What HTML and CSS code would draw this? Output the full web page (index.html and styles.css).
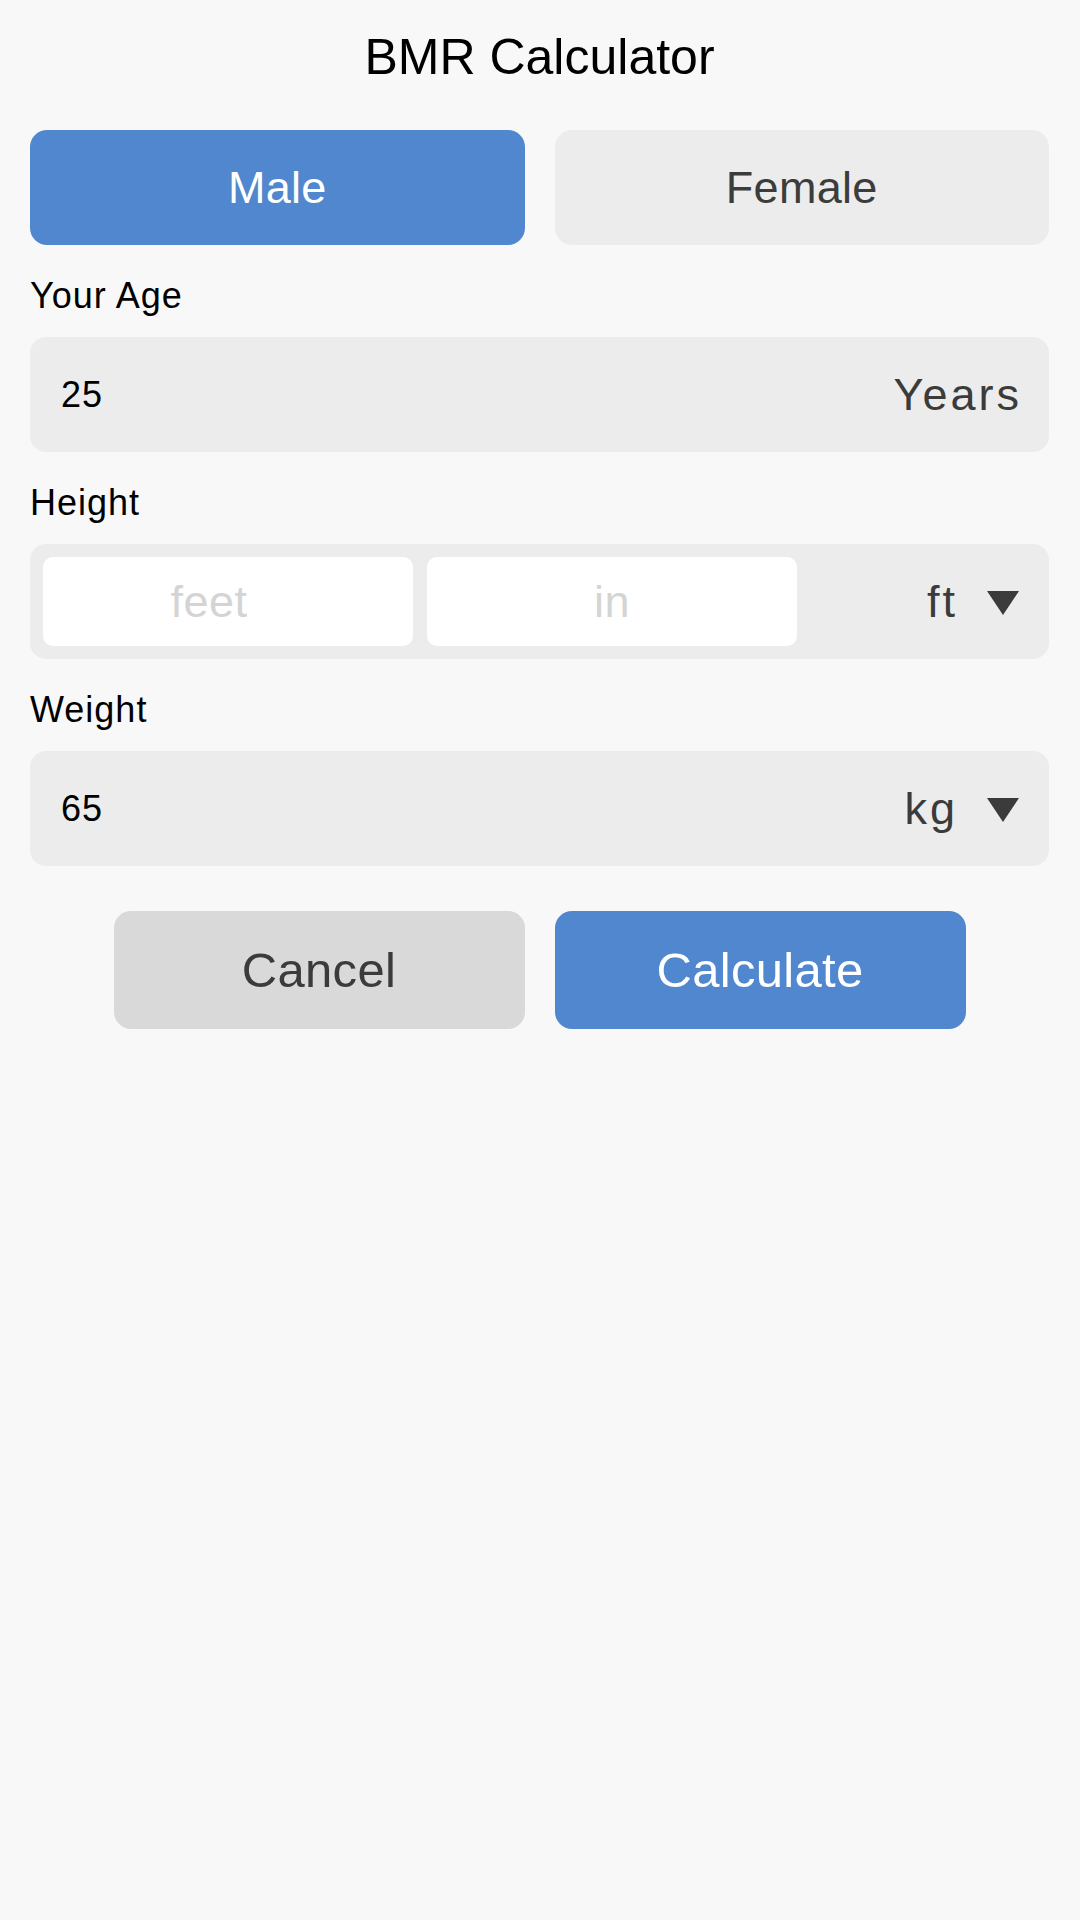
FILE: index.html
```html
<!DOCTYPE html>
<html lang="en">
<head>
<meta charset="utf-8">
<title>BMR Calculator</title>
<link rel="stylesheet" href="styles.css">
</head>
<body>
<main class="page">
  <h1 class="title">BMR Calculator</h1>
  <div class="gender-row">
    <div class="gender gender-active">Male</div>
    <div class="gender">Female</div>
  </div>

  <div class="label">Your Age</div>
  <div class="field">
    <span class="value">25</span>
    <span class="unit unit-years">Years</span>
  </div>

  <div class="label">Height</div>
  <div class="field field-height">
    <div class="subinput subinput-feet">feet</div>
    <div class="subinput">in</div>
    <div class="unit-select">
      <span class="unit">ft</span>
      <svg class="caret" width="32" height="24" viewBox="0 0 32 24"><polygon points="0,0 32,0 16,24" fill="#3b3b3b"/></svg>
    </div>
  </div>

  <div class="label">Weight</div>
  <div class="field">
    <span class="value">65</span>
    <div class="unit-select">
      <span class="unit">kg</span>
      <svg class="caret" width="32" height="24" viewBox="0 0 32 24"><polygon points="0,0 32,0 16,24" fill="#3b3b3b"/></svg>
    </div>
  </div>

  <div class="actions">
    <div class="btn btn-cancel">Cancel</div>
    <div class="btn btn-primary">Calculate</div>
  </div>
</main>
</body>
</html>
```

FILE: styles.css
```css
html, body {
  margin: 0;
  padding: 0;
  background: #f8f8f8;
}
body {
  width: 1080px;
  height: 1920px;
  font-family: "Liberation Sans", Arial, sans-serif;
  color: #000;
}
.page {
  padding: 27px 31px 0 30px;
  display: flex;
  flex-direction: column;
}
.title {
  margin: 0;
  font-size: 50px;
  font-weight: normal;
  line-height: 60px;
  text-align: center;
}
.gender-row {
  margin-top: 43px;
  display: flex;
  gap: 30px;
}
.gender {
  flex: 1;
  height: 115px;
  border-radius: 17px;
  background: #ececec;
  color: #3c3c3c;
  font-size: 45px;
  letter-spacing: 0.3px;
  display: flex;
  align-items: center;
  justify-content: center;
}
.gender-active {
  background: #5087ce;
  color: #fff;
}
.label {
  margin-top: 30px;
  margin-bottom: 20px;
  font-size: 36px;
  letter-spacing: 1px;
  line-height: 42px;
}
.field {
  height: 115px;
  border-radius: 16px;
  background: #ececec;
  display: flex;
  align-items: center;
  padding: 0 30px 0 31px;
  box-sizing: border-box;
}
.value {
  flex: 1;
  font-size: 36px;
  letter-spacing: 1px;
}
.unit {
  font-size: 45px;
  letter-spacing: 3px;
  color: #3b3b3b;
}
.unit-years {
  margin-right: -3px;
}
.unit-select {
  display: flex;
  align-items: center;
  gap: 29px;
  margin-left: auto;
}
.caret {
  display: block;
  margin-top: 2px;
}
.field-height {
  padding: 13px 30px 13px 13px;
  gap: 14px;
}
.subinput {
  width: 370px;
  height: 89px;
  border-radius: 10px;
  background: #fff;
  color: #d4d4d4;
  font-size: 45px;
  letter-spacing: 0.5px;
  display: flex;
  align-items: center;
  justify-content: center;
  box-sizing: border-box;
}
.subinput-feet {
  padding-right: 38px;
}
.actions {
  margin-top: 45px;
  display: flex;
  justify-content: center;
  gap: 30px;
}
.btn {
  width: 411px;
  height: 118px;
  border-radius: 17px;
  font-size: 49px;
  letter-spacing: 0.3px;
  display: flex;
  align-items: center;
  justify-content: center;
}
.btn-cancel {
  background: #d9d9d9;
  color: #3b3b3b;
}
.btn-primary {
  background: #5087ce;
  color: #fff;
}
```
